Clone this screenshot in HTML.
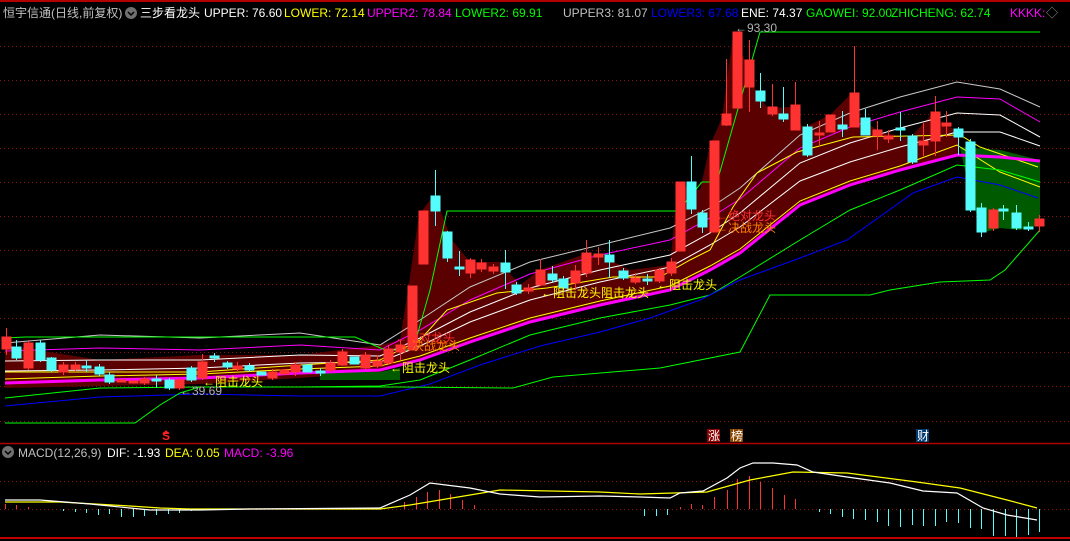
<!DOCTYPE html>
<html><head><meta charset="utf-8"><style>
html,body{margin:0;padding:0;background:#000;width:1070px;height:541px;overflow:hidden}
svg{display:block}
text{font-family:"Liberation Sans","Noto Sans CJK SC",sans-serif;font-size:12px}
</style></head><body>
<svg width="1070" height="541" viewBox="0 0 1070 541" xmlns="http://www.w3.org/2000/svg">
<rect width="1070" height="541" fill="#000"/>
<line x1="0" y1="1" x2="1070" y2="1" stroke="#b00000" stroke-width="2"/>
<g stroke="#8a1010" stroke-width="1" stroke-dasharray="1,3">
<line x1="0" y1="46.5" x2="1070" y2="46.5"/><line x1="0" y1="80.5" x2="1070" y2="80.5"/>
<line x1="0" y1="114.5" x2="1070" y2="114.5"/><line x1="0" y1="148.5" x2="1070" y2="148.5"/>
<line x1="0" y1="182.5" x2="1070" y2="182.5"/><line x1="0" y1="216.5" x2="1070" y2="216.5"/>
<line x1="0" y1="250.5" x2="1070" y2="250.5"/><line x1="0" y1="284.5" x2="1070" y2="284.5"/>
<line x1="0" y1="318.5" x2="1070" y2="318.5"/><line x1="0" y1="352.5" x2="1070" y2="352.5"/>
<line x1="0" y1="386.5" x2="1070" y2="386.5"/><line x1="0" y1="421.5" x2="1070" y2="421.5"/>
<line x1="0" y1="481.5" x2="1070" y2="481.5"/><line x1="0" y1="509.5" x2="1070" y2="509.5"/>
</g>
<!-- fills -->
<polygon fill="#5a0000" points="5,345 100,360 200,355 300,355 380,345 400,340 408,290 419,215 430,200 440,210 452,240 470,262 500,262 520,285 540,270 582,255 600,255 630,270 670,265 678,185 700,190 710,145 722,118 733,35 745,60 757,95 768,108 791,107 803,128 830,115 850,95 860,118 880,132 910,138 931,115 955,130 960,140 957,155 900,170 850,185 800,205 740,253 710,270 670,290 600,305 530,322 470,342 420,360 380,372 300,378 200,384 100,386 5,388"/>
<polygon fill="#005a00" points="960,147 1000,150 1040,160 1040,225 1035,226 1020,230 1000,228 985,232 975,210 966,175"/>
<polygon fill="#005a00" points="320,372 380,372 400,368 400,380 320,380"/>
<!-- envelope lines -->
<g fill="none" stroke-width="1">
<polyline stroke="#c8c8c8" points="5,343 100,335 200,338 300,333 380,345 420,320 470,287 530,262 600,245 670,228 710,208 740,188 800,135 850,113 900,97 957,82 1000,89 1040,107"/>
<polyline stroke="#ff00ff" points="5,351 100,348 200,350 300,345 380,350 420,330 470,300 530,274 600,255 670,240 710,218 740,199 800,148 850,127 900,112 957,97 1000,99 1040,122"/>
<polyline stroke="#ffffff" points="5,361 100,360 200,360 300,355 380,356 420,338 470,312 530,288 600,270 670,255 710,233 740,213 800,163 850,143 900,128 957,113 1000,115 1040,137"/>
<polyline stroke="#ffffff" points="5,371 100,370 200,368 300,363 380,362 420,346 470,322 530,300 600,282 670,267 710,245 740,227 800,181 850,162 900,147 957,132 1000,132 1040,146"/>
<polyline stroke="#ffff00" points="5,372 100,372 200,372 300,365 380,360 420,340 447,310 497,293 547,288 613,277 660,277 690,260 710,250 733,207 757,173 797,152 853,137 960,135 980,147 1038,167"/>
<polyline stroke="#ffff00" points="5,379 100,376 200,374 300,369 380,366 420,356 470,338 530,318 600,301 670,286 710,266 740,249 800,201 850,181 900,166 957,145 1000,172 1040,187"/>
<polyline stroke="#00ff00" points="5,398 100,388 200,387 300,387 380,386 420,380 470,360 530,335 600,318 670,305 710,295 740,277 800,240 850,210 900,190 957,165 1000,170 1040,182"/>
<polyline stroke="#0000ff" points="5,406 100,397 200,394 300,396 380,396 430,384 480,365 540,346 600,332 650,318 700,300 740,280 800,258 847,240 913,193 957,177 1000,185 1038,198"/>
<polyline stroke="#00ff00" points="5,423 135,423 160,405 180,393 200,387 400,387 513,388 553,377 660,368 740,352 770,295 870,295 890,290 940,282 990,280 1005,270 1040,230"/>
<polyline stroke="#00ff00" points="5,338 25,337 355,337 385,350 413,350 430,290 447,211 678,211 702,182 717,182 760,32 1040,32"/>
<polyline stroke="#ff00ff" stroke-width="3" points="5,383 100,380 200,378 300,373 380,370 420,360 470,342 530,322 600,305 670,290 710,270 740,253 800,205 850,185 900,170 957,155 1000,157 1040,161"/>
</g>
<!-- candles -->
<g id="c" stroke-width="1">
<g fill="#ff3232" stroke="#ff3232">
<line x1="6.5" y1="328" x2="6.5" y2="355"/><rect x="2" y="337" width="9" height="12"/>
<line x1="28.5" y1="340" x2="28.5" y2="370"/><rect x="24" y="343" width="9" height="25"/>
<line x1="63.5" y1="362" x2="63.5" y2="375"/><rect x="59" y="365" width="9" height="7"/>
<line x1="75.5" y1="362" x2="75.5" y2="372"/><rect x="71" y="365" width="9" height="4"/>
<rect x="117" y="380" width="9" height="2"/><rect x="129" y="381" width="9" height="2"/>
<line x1="144.5" y1="377" x2="144.5" y2="385"/><rect x="140" y="379" width="9" height="4"/>
<line x1="179.5" y1="378" x2="179.5" y2="390"/><rect x="175" y="380" width="9" height="8"/>
<line x1="202.5" y1="354" x2="202.5" y2="380"/><rect x="198" y="362" width="9" height="16"/>
<line x1="237.5" y1="362" x2="237.5" y2="371"/><rect x="233" y="366" width="9" height="3"/>
<line x1="272.5" y1="369" x2="272.5" y2="380"/><rect x="268" y="372" width="9" height="6"/>
<rect x="280" y="370" width="9" height="4"/>
<line x1="295.5" y1="362" x2="295.5" y2="376"/><rect x="291" y="365" width="9" height="7"/>
<line x1="330.5" y1="360" x2="330.5" y2="372"/><rect x="326" y="363" width="9" height="7"/>
<line x1="342.5" y1="349" x2="342.5" y2="366"/><rect x="338" y="352" width="9" height="13"/>
<line x1="365.5" y1="352" x2="365.5" y2="370"/><rect x="361" y="355" width="9" height="13"/>
<line x1="377.5" y1="355" x2="377.5" y2="368"/><rect x="373" y="361" width="9" height="5"/>
<line x1="388.5" y1="345" x2="388.5" y2="365"/><rect x="384" y="349" width="9" height="14"/>
<line x1="400.5" y1="340" x2="400.5" y2="360"/><rect x="396" y="345" width="9" height="7"/>
<rect x="408" y="286" width="9" height="64"/>
<rect x="419" y="211" width="9" height="53"/>
<line x1="470.5" y1="258" x2="470.5" y2="278"/><rect x="466" y="260" width="9" height="13"/>
<line x1="481.5" y1="259" x2="481.5" y2="272"/><rect x="477" y="263" width="9" height="6"/>
<line x1="493.5" y1="264" x2="493.5" y2="274"/><rect x="489" y="267" width="9" height="4"/>
<line x1="528.5" y1="284" x2="528.5" y2="294"/><rect x="524" y="288" width="9" height="3"/>
<line x1="540.5" y1="259" x2="540.5" y2="286"/><rect x="536" y="270" width="9" height="15"/>
<line x1="575.5" y1="265" x2="575.5" y2="290"/><rect x="571" y="271" width="9" height="12"/>
<line x1="586.5" y1="240" x2="586.5" y2="277"/><rect x="582" y="253" width="9" height="20"/>
<line x1="598.5" y1="247" x2="598.5" y2="265"/><rect x="594" y="254" width="9" height="3"/>
<line x1="635.5" y1="273" x2="635.5" y2="284"/><rect x="631" y="278" width="9" height="4"/>
<line x1="659.5" y1="268" x2="659.5" y2="283"/><rect x="655" y="270" width="9" height="11"/>
<line x1="671.5" y1="258" x2="671.5" y2="276"/><rect x="667" y="262" width="9" height="11"/>
<rect x="676" y="182" width="9" height="69"/>
<rect x="710" y="141" width="9" height="91"/>
<line x1="726.5" y1="59" x2="726.5" y2="126"/><rect x="722" y="114" width="9" height="11"/>
<rect x="733" y="32" width="9" height="76"/>
<line x1="749.5" y1="40" x2="749.5" y2="112"/><rect x="745" y="60" width="9" height="27"/>
<line x1="772.5" y1="84" x2="772.5" y2="116"/><rect x="768" y="107" width="9" height="7"/>
<line x1="795.5" y1="82" x2="795.5" y2="130"/><rect x="791" y="105" width="9" height="25"/>
<line x1="819.5" y1="121" x2="819.5" y2="146"/><rect x="815" y="133" width="9" height="2"/>
<rect x="826" y="115" width="9" height="17"/>
<line x1="854.5" y1="46" x2="854.5" y2="127"/><rect x="850" y="93" width="9" height="34"/>
<line x1="877.5" y1="121" x2="877.5" y2="150"/><rect x="873" y="130" width="9" height="6"/>
<line x1="888.5" y1="130" x2="888.5" y2="143"/><rect x="884" y="136" width="9" height="3"/>
<line x1="923.5" y1="123" x2="923.5" y2="156"/><rect x="919" y="141" width="9" height="4"/>
<line x1="935.5" y1="96" x2="935.5" y2="156"/><rect x="931" y="112" width="9" height="29"/>
<line x1="946.5" y1="111" x2="946.5" y2="137"/><rect x="942" y="123" width="9" height="3"/>
<line x1="993.5" y1="208" x2="993.5" y2="231"/><rect x="989" y="210" width="9" height="18"/>
<line x1="1039.5" y1="215" x2="1039.5" y2="232"/><rect x="1035" y="219" width="9" height="7"/>
</g>
<g fill="#54fcfc" stroke="#54fcfc">
<line x1="16.5" y1="340" x2="16.5" y2="360"/><rect x="12" y="347" width="9" height="11"/>
<line x1="40.5" y1="340" x2="40.5" y2="362"/><rect x="36" y="343" width="9" height="17"/>
<line x1="51.5" y1="357" x2="51.5" y2="372"/><rect x="47" y="358" width="9" height="12"/>
<line x1="86.5" y1="360" x2="86.5" y2="372"/><rect x="82" y="366" width="9" height="2"/>
<line x1="99.5" y1="364" x2="99.5" y2="376"/><rect x="95" y="367" width="9" height="7"/>
<line x1="109.5" y1="372" x2="109.5" y2="384"/><rect x="105" y="375" width="9" height="7"/>
<line x1="156.5" y1="375" x2="156.5" y2="388"/><rect x="152" y="379" width="9" height="2"/>
<line x1="169.5" y1="378" x2="169.5" y2="390"/><rect x="165" y="380" width="9" height="8"/>
<line x1="191.5" y1="366" x2="191.5" y2="382"/><rect x="187" y="368" width="9" height="12"/>
<line x1="214.5" y1="353" x2="214.5" y2="362"/><rect x="210" y="356" width="9" height="2"/>
<line x1="227.5" y1="361" x2="227.5" y2="369"/><rect x="223" y="363" width="9" height="4"/>
<line x1="249.5" y1="363" x2="249.5" y2="372"/><rect x="245" y="366" width="9" height="4"/>
<rect x="257" y="372" width="9" height="3"/>
<rect x="303" y="365" width="9" height="7"/>
<line x1="320.5" y1="368" x2="320.5" y2="376"/><rect x="316" y="371" width="9" height="2"/>
<rect x="350" y="357" width="9" height="7"/>
<line x1="435.5" y1="170" x2="435.5" y2="226"/><rect x="431" y="196" width="9" height="15"/>
<line x1="447.5" y1="231" x2="447.5" y2="262"/><rect x="443" y="232" width="9" height="26"/>
<line x1="459.5" y1="251" x2="459.5" y2="276"/><rect x="455" y="267" width="9" height="2"/>
<line x1="505.5" y1="250" x2="505.5" y2="289"/><rect x="501" y="263" width="9" height="9"/>
<line x1="516.5" y1="282" x2="516.5" y2="295"/><rect x="512" y="285" width="9" height="8"/>
<line x1="552.5" y1="266" x2="552.5" y2="283"/><rect x="548" y="274" width="9" height="6"/>
<line x1="563.5" y1="276" x2="563.5" y2="290"/><rect x="559" y="279" width="9" height="9"/>
<line x1="609.5" y1="240" x2="609.5" y2="278"/><rect x="605" y="255" width="9" height="7"/>
<line x1="623.5" y1="268" x2="623.5" y2="280"/><rect x="619" y="271" width="9" height="7"/>
<line x1="647.5" y1="274" x2="647.5" y2="285"/><rect x="643" y="279" width="9" height="2"/>
<line x1="691.5" y1="156" x2="691.5" y2="214"/><rect x="687" y="182" width="9" height="27"/>
<line x1="702.5" y1="210" x2="702.5" y2="233"/><rect x="698" y="213" width="9" height="14"/>
<line x1="760.5" y1="73" x2="760.5" y2="108"/><rect x="756" y="91" width="9" height="10"/>
<line x1="783.5" y1="87" x2="783.5" y2="122"/><rect x="779" y="114" width="9" height="5"/>
<line x1="807.5" y1="124" x2="807.5" y2="157"/><rect x="803" y="127" width="9" height="28"/>
<line x1="842.5" y1="111" x2="842.5" y2="137"/><rect x="838" y="125" width="9" height="4"/>
<line x1="865.5" y1="109" x2="865.5" y2="135"/><rect x="861" y="118" width="9" height="17"/>
<line x1="900.5" y1="112" x2="900.5" y2="141"/><rect x="896" y="128" width="9" height="2"/>
<line x1="912.5" y1="134" x2="912.5" y2="164"/><rect x="908" y="136" width="9" height="26"/>
<line x1="958.5" y1="127" x2="958.5" y2="155"/><rect x="954" y="129" width="9" height="8"/>
<line x1="970.5" y1="139" x2="970.5" y2="212"/><rect x="966" y="142" width="9" height="68"/>
<line x1="981.5" y1="203" x2="981.5" y2="237"/><rect x="977" y="208" width="9" height="24"/>
<line x1="1003.5" y1="205" x2="1003.5" y2="220"/><rect x="999" y="209" width="9" height="2"/>
<line x1="1016.5" y1="205" x2="1016.5" y2="230"/><rect x="1012" y="213" width="9" height="15"/>
<line x1="1028.5" y1="222" x2="1028.5" y2="231"/><rect x="1024" y="227" width="9" height="2"/>
</g>
</g>
<!-- labels -->
<g font-size="12">
<text x="203" y="386" fill="#ffff00">←阻击龙头</text>
<text x="180" y="395" fill="#b0b0b0">←39.69</text>
<text x="390" y="372" fill="#ffff00">←阻击龙头</text>
<text x="395" y="342" fill="#ff3030">←绝对龙头</text>
<text x="400" y="350" fill="#ff8000">←决战龙头</text>
<text x="541" y="297" fill="#ffff00">←阻击龙头阻击龙头</text>
<text x="657" y="289" fill="#ffff00">←阻击龙头</text>
<text x="716" y="220" fill="#ff3030">←绝对龙头</text>
<text x="716" y="232" fill="#ff8000">←决战龙头</text>
<text x="735" y="32" fill="#b0b0b0">←93.30</text>
</g>
<!-- markers -->
<text x="162" y="440" fill="#ff2020" font-size="11" font-weight="bold">S</text>
<polygon points="166,430 163,434 169,434" fill="#ff2020"/>
<rect x="707" y="429" width="13" height="13" fill="#8b0000"/><text x="708" y="440" fill="#fff" font-size="11">涨</text>
<rect x="730" y="429" width="13" height="13" fill="#8b4500"/><text x="731" y="440" fill="#fff" font-size="11">榜</text>
<rect x="916" y="429" width="13" height="13" fill="#003a70"/><text x="917" y="440" fill="#fff" font-size="11">财</text>
<!-- header -->
<text x="3" y="17" fill="#c0c0c0">恒宇信通(日线,前复权)</text>
<circle cx="131" cy="13" r="6" fill="#707070"/><polyline points="128,12 131,15 134,12" fill="none" stroke="#000" stroke-width="1.5"/>
<text x="140" y="17" fill="#ffffff">三步看龙头</text>
<text x="204" y="17" fill="#ffffff">UPPER: 76.60</text>
<text x="284" y="17" fill="#ffff00">LOWER: 72.14</text>
<text x="367" y="17" fill="#ff00ff">UPPER2: 78.84</text>
<text x="455" y="17" fill="#00ff00">LOWER2: 69.91</text>
<text x="563" y="17" fill="#c0c0c0">UPPER3: 81.07</text>
<text x="651" y="17" fill="#0000ff">LOWER3: 67.68</text>
<text x="741" y="17" fill="#ffffff">ENE: 74.37</text>
<text x="806" y="17" fill="#00ff00">GAOWEI: 92.00</text>
<text x="891" y="17" fill="#00ff00">ZHICHENG: 62.74</text>
<text x="1010" y="17" fill="#ff00ff">KKKK:</text>
<text x="1046" y="17" fill="#909090">◇</text>
<!-- MACD -->
<line x1="0" y1="443.5" x2="1070" y2="443.5" stroke="#b00000" stroke-width="1.5"/>
<line x1="0" y1="538" x2="1070" y2="538" stroke="#c00000" stroke-width="2"/>
<circle cx="8" cy="452" r="6" fill="#707070"/><polyline points="5,451 8,454 11,451" fill="none" stroke="#000" stroke-width="1.5"/>
<text x="18" y="457" fill="#c0c0c0">MACD(12,26,9)</text>
<text x="107" y="457" fill="#ffffff">DIF: -1.93</text>
<text x="165" y="457" fill="#ffff00">DEA: 0.05</text>
<text x="224" y="457" fill="#ff00ff">MACD: -3.96</text>
<g stroke="#ff3232" stroke-width="1">
<line x1="5.5" y1="509" x2="5.5" y2="504"/><line x1="16.5" y1="509" x2="16.5" y2="505"/><line x1="28.5" y1="509" x2="28.5" y2="507"/>
<line x1="404.5" y1="509" x2="404.5" y2="502"/><line x1="416.5" y1="509" x2="416.5" y2="497"/><line x1="427.5" y1="509" x2="427.5" y2="492"/><line x1="439.5" y1="509" x2="439.5" y2="490"/><line x1="450.5" y1="509" x2="450.5" y2="494"/><line x1="462.5" y1="509" x2="462.5" y2="500"/><line x1="474.5" y1="509" x2="474.5" y2="505"/>
<line x1="680.5" y1="509" x2="680.5" y2="507"/><line x1="691.5" y1="509" x2="691.5" y2="504"/><line x1="702.5" y1="509" x2="702.5" y2="505"/><line x1="714.5" y1="509" x2="714.5" y2="497"/><line x1="727.5" y1="509" x2="727.5" y2="490"/><line x1="737.5" y1="509" x2="737.5" y2="479"/><line x1="749.5" y1="509" x2="749.5" y2="476"/><line x1="760.5" y1="509" x2="760.5" y2="482"/><line x1="772.5" y1="509" x2="772.5" y2="488"/><line x1="784.5" y1="509" x2="784.5" y2="495"/><line x1="795.5" y1="509" x2="795.5" y2="499"/>
</g>
<g stroke="#54fcfc" stroke-width="1">
<line x1="63.5" y1="509" x2="63.5" y2="511"/><line x1="75.5" y1="509" x2="75.5" y2="512"/><line x1="86.5" y1="509" x2="86.5" y2="513"/><line x1="98.5" y1="509" x2="98.5" y2="515"/><line x1="109.5" y1="509" x2="109.5" y2="514"/><line x1="121.5" y1="509" x2="121.5" y2="517"/><line x1="133.5" y1="509" x2="133.5" y2="517"/><line x1="144.5" y1="509" x2="144.5" y2="516"/><line x1="156.5" y1="509" x2="156.5" y2="515"/><line x1="168.5" y1="509" x2="168.5" y2="514"/><line x1="179.5" y1="509" x2="179.5" y2="513"/><line x1="191.5" y1="509" x2="191.5" y2="511"/>
<line x1="644.5" y1="509" x2="644.5" y2="516"/><line x1="656.5" y1="509" x2="656.5" y2="516"/><line x1="667.5" y1="509" x2="667.5" y2="515"/>
<line x1="819.5" y1="509" x2="819.5" y2="512"/><line x1="830.5" y1="509" x2="830.5" y2="514"/><line x1="842.5" y1="509" x2="842.5" y2="517"/><line x1="853.5" y1="509" x2="853.5" y2="519"/><line x1="865.5" y1="509" x2="865.5" y2="520"/><line x1="877.5" y1="509" x2="877.5" y2="522"/><line x1="888.5" y1="509" x2="888.5" y2="526"/><line x1="900.5" y1="509" x2="900.5" y2="527"/><line x1="912.5" y1="509" x2="912.5" y2="525"/><line x1="923.5" y1="509" x2="923.5" y2="526"/><line x1="935.5" y1="509" x2="935.5" y2="526"/><line x1="946.5" y1="509" x2="946.5" y2="522"/><line x1="958.5" y1="509" x2="958.5" y2="523"/><line x1="970.5" y1="509" x2="970.5" y2="528"/><line x1="981.5" y1="509" x2="981.5" y2="529"/><line x1="993.5" y1="509" x2="993.5" y2="536"/><line x1="1005.5" y1="509" x2="1005.5" y2="536"/><line x1="1016.5" y1="509" x2="1016.5" y2="537"/><line x1="1028.5" y1="509" x2="1028.5" y2="535"/><line x1="1039.5" y1="509" x2="1039.5" y2="532"/>
</g>
<polyline fill="none" stroke="#ffff00" stroke-width="1.2" points="5,502 60,502 130,506 160,508 190,509 380,509 410,505 440,500 500,490 600,492 640,494 707,492 750,480 793,472 847,473 917,482 960,488 1007,500 1037,508"/>
<polyline fill="none" stroke="#ffffff" stroke-width="1.2" points="5,500 40,500 90,504 130,508 150,510 200,510 250,509 380,508 410,495 430,483 470,488 500,494 540,497 600,496 640,497 670,498 680,493 703,491 727,478 740,468 753,463 773,463 797,465 813,472 847,477 890,483 923,491 957,493 983,508 1007,515 1037,520"/>
</svg>
</body></html>
